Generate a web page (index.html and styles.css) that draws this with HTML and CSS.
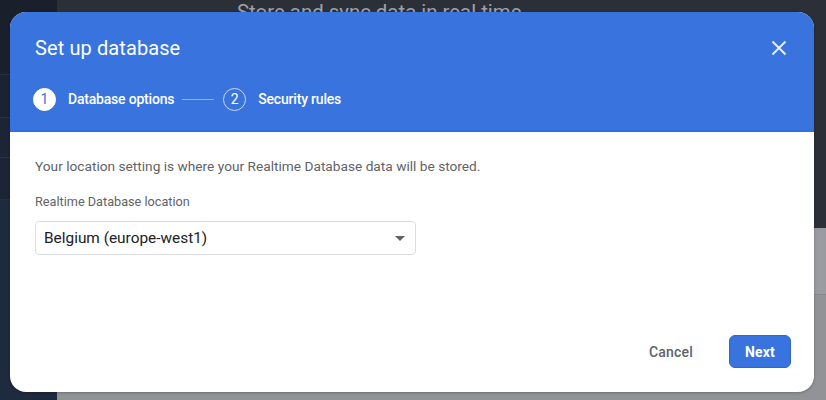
FILE: index.html
```html
<!DOCTYPE html>
<html>
<head>
<meta charset="utf-8">
<link rel="stylesheet" href="styles.css">
</head>
<body>
<div class="app">
  <aside class="sidebar">
    <div class="side-a"></div>
    <div class="side-b"></div>
    <div class="side-c"></div>
    <div class="side-d"></div>
    <div class="side-e"></div>
  </aside>
  <main class="main">
    <div class="hero"><h2 class="hero-title">Store and sync data in real time</h2></div>
    <div class="lower">
      <div class="lower-a"></div>
      <div class="lower-b"></div>
    </div>
  </main>
</div>

<div class="dialog">
  <header class="dlg-head">
    <div class="title-row">
      <h1 class="title">Set up database</h1>
      <button class="close" aria-label="Close">
        <svg width="24" height="24" viewBox="0 0 24 24"><path d="M5.5 5.5 L18.5 18.5 M18.5 5.5 L5.5 18.5" stroke="#e6edfb" stroke-width="2" fill="none"/></svg>
      </button>
    </div>
    <div class="stepper">
      <div class="step active"><span class="num">1</span><span class="label">Database options</span></div>
      <span class="connector"></span>
      <div class="step"><span class="num">2</span><span class="label">Security rules</span></div>
    </div>
  </header>
  <section class="dlg-body">
    <p class="desc">Your location setting is where your Realtime Database data will be stored.</p>
    <label class="field-label">Realtime Database location</label>
    <div class="select">
      <span>Belgium (europe-west1)</span>
      <span class="caret"></span>
    </div>
  </section>
  <footer class="dlg-foot">
    <button class="btn-cancel">Cancel</button>
    <button class="btn-next">Next</button>
  </footer>
</div>
</body>
</html>
```

FILE: styles.css
```css
* { box-sizing: border-box; }
html, body { margin: 0; padding: 0; }
body {
  width: 826px;
  height: 400px;
  overflow: hidden;
  font-family: Roboto, "Liberation Sans", sans-serif;
  position: relative;
  background: #2a2f37;
}
.app {
  display: flex;
  height: 400px;
}
.sidebar {
  width: 57px;
  display: flex;
  flex-direction: column;
  background: #1c2535;
}
.side-a { height: 75px; background: #19202c; border-bottom: 1px solid #283143; }
.side-b { height: 43px; background: #1a2332; border-bottom: 1px solid #2a3446; }
.side-c { height: 40px; background: #1b2536; border-bottom: 1px solid #2a3446; }
.side-d { height: 42px; background: #1b2536; border-bottom: 1px solid #26304a; }
.side-e { flex: 1; background: #1e2a3d; }
.main {
  flex: 1;
  display: flex;
  flex-direction: column;
}
.hero {
  height: 228px;
  background: #2b3038;
  padding-left: 180px;
}
.hero-title {
  margin: 0;
  font-weight: 400;
  font-size: 20.4px;
  line-height: 24px;
  color: #9da1a7;
}
.lower { flex: 1; display: flex; flex-direction: column; }
.lower-a { height: 67px; background: #9a9ba0; border-bottom: 1px solid #85868b; }
.lower-b { flex: 1; background: #929397; }

.dialog {
  position: absolute;
  left: 10px;
  top: 12px;
  width: 804px;
  height: 380px;
  background: #fff;
  border-radius: 16px;
  overflow: hidden;
  display: flex;
  flex-direction: column;
  box-shadow: 0 1px 3px rgba(0,0,0,0.25);
}
.dlg-head {
  height: 120px;
  background: #3873de;
  border-bottom: 2px solid #2f6fe3;
  padding: 24px 23px 0 25px;
}
.title-row {
  display: flex;
  justify-content: space-between;
  align-items: center;
  height: 24px;
}
.title {
  margin: 0;
  font-size: 20px;
  font-weight: 400;
  line-height: 24px;
  color: #fff;
  letter-spacing: 0.1px;
}
.close {
  border: 0;
  padding: 0;
  background: none;
  width: 24px;
  height: 24px;
  display: block;
}
.close svg { display: block; }
.stepper {
  margin-top: 27px;
  height: 24px;
  display: flex;
  align-items: center;
  margin-left: -2px;
}
.step {
  display: flex;
  align-items: center;
  gap: 12px;
}
.num {
  width: 23px;
  height: 23px;
  border-radius: 50%;
  border: 1.5px solid #c9d8f6;
  color: #fff;
  font-size: 14px;
  display: flex;
  align-items: center;
  justify-content: center;
  line-height: 1;
}
.step.active .num {
  background: #fff;
  border-color: #fff;
  color: #3873de;
}
.label {
  color: #fff;
  font-size: 14px;
  font-weight: 500;
  letter-spacing: -0.2px;
}
.connector {
  width: 32px;
  height: 1px;
  background: #8fb0ec;
  margin: 0 9px 0 8px;
}
.dlg-body {
  flex: 1;
  padding: 24px 25px 0;
}
.desc {
  margin: 0;
  font-size: 13.7px;
  line-height: 20px;
  color: #5f6368;
}
.field-label {
  display: block;
  margin-top: 16px;
  font-size: 12.7px;
  line-height: 20px;
  color: #5f6368;
}
.select {
  margin-top: 9px;
  width: 381px;
  height: 34px;
  border: 1px solid #dadce0;
  border-radius: 4px;
  display: flex;
  align-items: center;
  justify-content: space-between;
  padding: 0 10px 0 8px;
  font-size: 15.4px;
  color: #202124;
}
.caret {
  width: 0;
  height: 0;
  border-left: 5px solid transparent;
  border-right: 5px solid transparent;
  border-top: 5px solid #5f6368;
}
.dlg-foot {
  display: flex;
  justify-content: flex-end;
  align-items: center;
  gap: 20px;
  padding: 0 23px 24px 0;
}
.btn-cancel {
  border: 0;
  background: none;
  font-family: inherit;
  font-size: 14px;
  font-weight: 500;
  color: #5f6368;
  letter-spacing: 0.2px;
  padding: 0 16px;
  height: 33px;
}
.btn-next {
  width: 62px;
  height: 33px;
  border: 1px solid #2f66c9;
  border-radius: 6px;
  background: #3873de;
  color: #fff;
  font-family: inherit;
  font-size: 14px;
  font-weight: 700;
  letter-spacing: 0.2px;
}
```
